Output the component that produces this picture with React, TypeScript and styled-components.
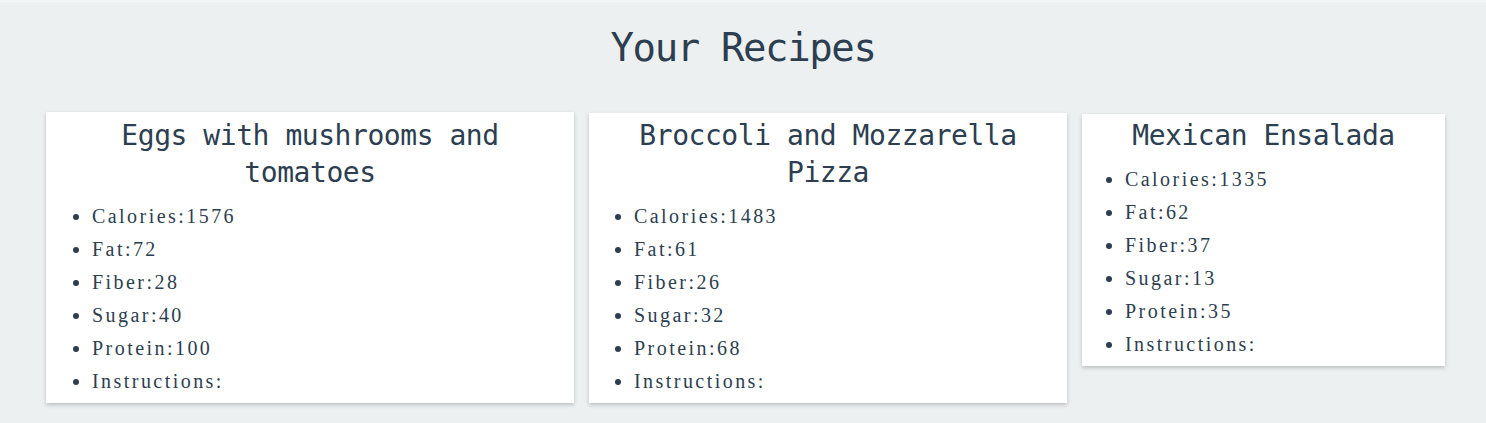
import React from "react";
import styled, { createGlobalStyle } from "styled-components";

const GlobalStyle = createGlobalStyle`
  html, body {
    margin: 0;
    padding: 0;
    background: #ecf0f1;
  }
  * { box-sizing: border-box; }
`;

const Page = styled.div`
  min-height: 100vh;
  background: #ecf0f1;
  border-top: 2px solid #f4f6f7;
  color: #2c3e50;
`;

const Title = styled.h1`
  margin: 0;
  padding-top: 23px;
  font-family: "DejaVu Sans Mono", monospace;
  font-weight: normal;
  font-size: 39px;
  line-height: 46px;
  letter-spacing: -1.4px;
  text-align: center;
  color: #2c3e50;
`;

const CardRow = styled.div`
  display: flex;
  align-items: flex-start;
  gap: 15px;
  margin-top: 41px;
  padding-left: 46px;
`;

const Card = styled.div<{ $width: number; $shift?: number }>`
  width: ${(p) => p.$width}px;
  flex: 0 0 auto;
  margin-top: ${(p) => p.$shift ?? 0}px;
  background: #ffffff;
  box-shadow: 0 2px 4px rgba(0, 0, 0, 0.2);
  padding: ${(p) => 5 - (p.$shift ?? 0)}px 0 5px;
`;

const CardTitle = styled.h2`
  margin: 0;
  padding: 0 12px;
  font-family: "DejaVu Sans Mono", monospace;
  font-weight: normal;
  font-size: 28px;
  line-height: 37px;
  letter-spacing: -0.45px;
  text-align: center;
  color: #2c3e50;
`;

const Facts = styled.ul<{ $indent: number }>`
  margin: 9px 0 0;
  padding-left: ${(p) => p.$indent}px;
  list-style: disc;
`;

const Fact = styled.li`
  font-family: "Liberation Serif", serif;
  font-size: 20px;
  line-height: 33px;
  letter-spacing: 2.45px;
  color: #2c3e50;
`;

type Recipe = {
  name: string;
  width: number;
  indent: number;
  shift?: number;
  calories: number;
  fat: number;
  fiber: number;
  sugar: number;
  protein: number;
};

const recipes: Recipe[] = [
  { name: "Eggs with mushrooms and tomatoes", width: 528, indent: 46, calories: 1576, fat: 72, fiber: 28, sugar: 40, protein: 100 },
  { name: "Broccoli and Mozzarella Pizza", width: 478, indent: 45, shift: 1, calories: 1483, fat: 61, fiber: 26, sugar: 32, protein: 68 },
  { name: "Mexican Ensalada", width: 363, indent: 43, shift: 2, calories: 1335, fat: 62, fiber: 37, sugar: 13, protein: 35 },
];

export default function App() {
  return (
    <>
      <GlobalStyle />
      <Page>
        <Title>Your Recipes</Title>
        <CardRow>
          {recipes.map((r) => (
            <Card key={r.name} $width={r.width} $shift={r.shift}>
              <CardTitle>{r.name}</CardTitle>
              <Facts $indent={r.indent}>
                <Fact>Calories:{r.calories}</Fact>
                <Fact>Fat:{r.fat}</Fact>
                <Fact>Fiber:{r.fiber}</Fact>
                <Fact>Sugar:{r.sugar}</Fact>
                <Fact>Protein:{r.protein}</Fact>
                <Fact>Instructions:</Fact>
              </Facts>
            </Card>
          ))}
        </CardRow>
      </Page>
    </>
  );
}
